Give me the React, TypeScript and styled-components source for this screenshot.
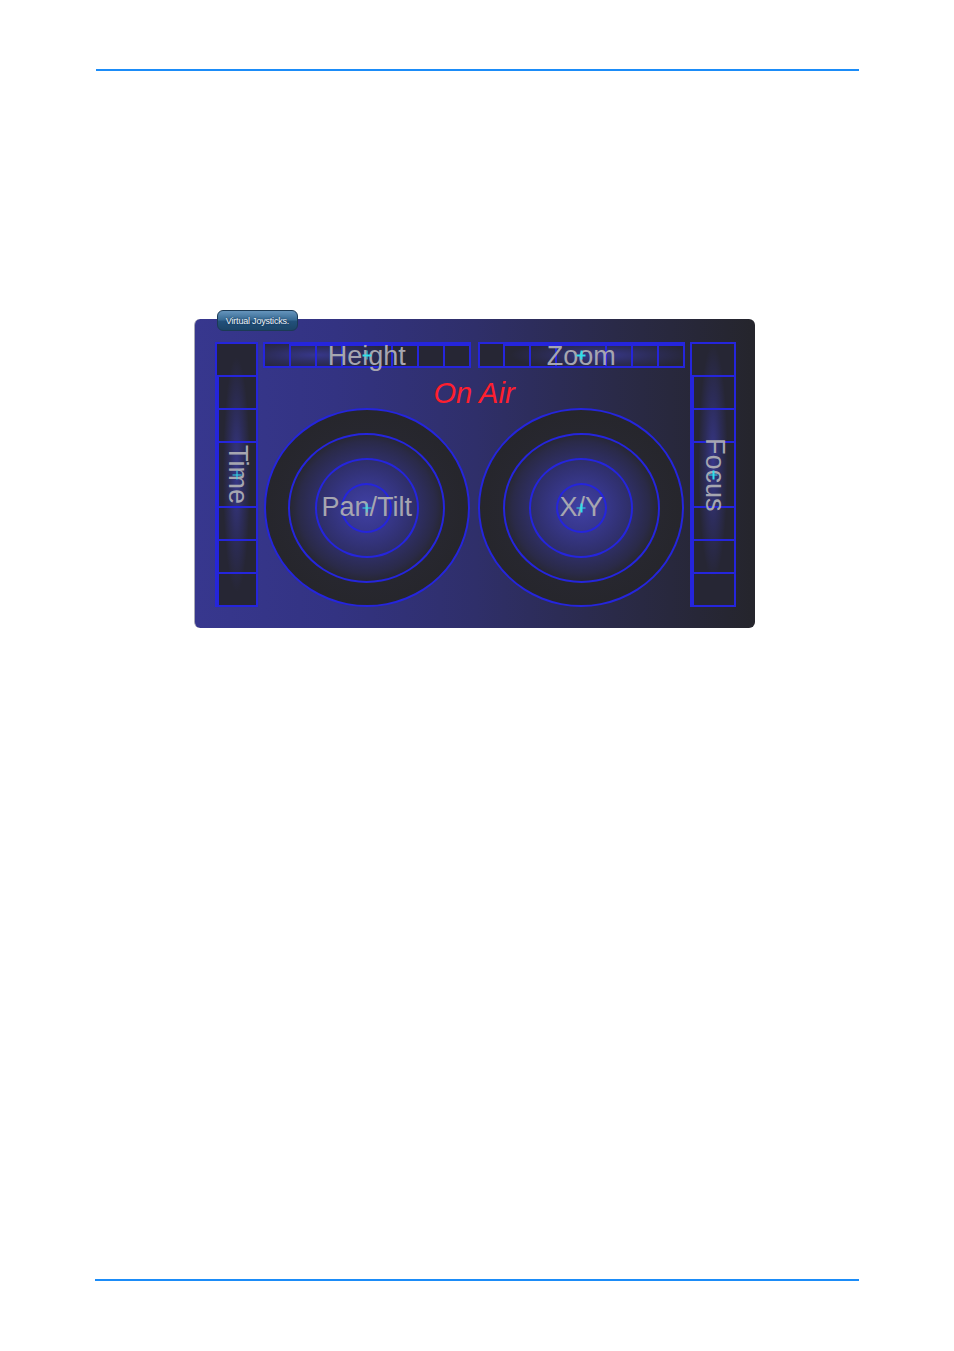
import React from "react";
import styled, { createGlobalStyle } from "styled-components";

const GlobalStyle = createGlobalStyle`
  html, body {
    margin: 0;
    padding: 0;
    background: #ffffff;
    font-family: "Liberation Sans", Arial, sans-serif;
  }
`;

const LINE = "#2525dc";

const Page = styled.div`
  width: 954px;
  height: 1351px;
  display: flex;
  flex-direction: column;
  padding-top: 69px;
  box-sizing: border-box;
  overflow: hidden;
`;

const Rule = styled.div<{ $left: number; $width: number; $top: number; $thick: number }>`
  margin-left: ${({ $left }) => $left}px;
  margin-top: ${({ $top }) => $top}px;
  width: ${({ $width }) => $width}px;
  height: ${({ $thick }) => $thick}px;
  background: #1b8cf8;
  flex-shrink: 0;
`;

const Panel = styled.section`
  position: relative;
  margin: 248px 0 0 194px;
  width: 561px;
  height: 309px;
  box-sizing: border-box;
  padding: 23px 19px 21px 20px;
  border-radius: 6px;
  border-left: 1px solid #a9a9b6;
  background: linear-gradient(
    to right,
    #37378e 0%,
    #333382 25%,
    #2f2f6a 50%,
    #2a2a48 75%,
    #25252c 100%
  );
  display: grid;
  grid-template-columns: 43px 422px 46px;
  grid-template-rows: minmax(0, 1fr);
  column-gap: 5px;
  flex-shrink: 0;
`;

const Tab = styled.div`
  position: absolute;
  top: -9px;
  left: 22px;
  width: 81px;
  height: 21px;
  box-sizing: border-box;
  border-radius: 6px;
  border: 1px solid #1b3a55;
  background: linear-gradient(#6594bc 0%, #3a6d96 45%, #22507a 55%, #1c4567 100%);
  color: #eef4fa;
  font-size: 9px;
  letter-spacing: -0.2px;
  display: flex;
  align-items: center;
  justify-content: center;
  text-shadow: 0 0 2px #0c2a44;
`;

const Strip = styled.div<{ $vertical?: boolean; $glow: string }>`
  position: relative;
  display: flex;
  flex-direction: ${({ $vertical }) => ($vertical ? "column" : "row")};
  border: 2px solid ${LINE};
  box-sizing: border-box;
  min-height: 0;
  background: radial-gradient(
    ${({ $vertical }) => ($vertical ? "35% 45%" : "45% 70%")} at ${({ $glow }) => $glow},
    #37378a 0%,
    #2c2c58 55%,
    #262634 100%
  );
`;

const Cell = styled.div<{ $span: number; $vertical?: boolean }>`
  flex: ${({ $span }) => $span} 1 0;
  display: flex;
  align-items: center;
  justify-content: center;
  min-width: 0;
  min-height: 0;
  box-sizing: border-box;
  & + & {
    ${({ $vertical }) => ($vertical ? "border-top" : "border-left")}: 2px solid ${LINE};
  }
`;

const Label = styled.span<{ $vertical?: boolean }>`
  position: relative;
  z-index: 1;
  font-size: 27px;
  line-height: 1;
  color: #a6a6b0;
  white-space: nowrap;
  writing-mode: ${({ $vertical }) => ($vertical ? "vertical-rl" : "horizontal-tb")};
`;

const Cross = styled.span`
  position: absolute;
  z-index: 2;
  left: 50%;
  top: 50%;
  width: 9px;
  height: 9px;
  transform: translate(-50%, -50%);
  pointer-events: none;
  &::before,
  &::after {
    content: "";
    position: absolute;
    background: #2ee0ea;
  }
  &::before {
    left: 0;
    right: 0;
    top: 4px;
    height: 1.5px;
  }
  &::after {
    top: 0;
    bottom: 0;
    left: 4px;
    width: 1.5px;
  }
`;

const Middle = styled.div`
  display: flex;
  flex-direction: column;
`;

const Pair = styled.div<{ $height: number }>`
  display: grid;
  grid-template-columns: 1fr 1fr;
  grid-template-rows: minmax(0, 1fr);
  column-gap: 7px;
  height: ${({ $height }) => $height}px;
  flex-shrink: 0;
  justify-items: center;
`;

const OnAir = styled.div`
  height: 40px;
  flex-shrink: 0;
  box-sizing: border-box;
  padding-top: 10px;
  line-height: 30px;
  text-align: center;
  font-size: 29px;
  font-style: italic;
  color: #ff1f2e;
`;

const Joystick = styled.div`
  position: relative;
  width: 206px;
  height: 199px;
  box-sizing: border-box;
  border-radius: 50%;
  border: 2px solid ${LINE};
  background: radial-gradient(
    closest-side,
    #4040a4 0%,
    #38388e 22%,
    #30306e 45%,
    #2a2a48 68%,
    #27272f 77%,
    #26262c 100%
  );
  display: flex;
  align-items: center;
  justify-content: center;
`;

const Ring = styled.div<{ $w: number; $h: number }>`
  width: ${({ $w }) => $w}px;
  height: ${({ $h }) => $h}px;
  flex-shrink: 0;
  box-sizing: border-box;
  border-radius: 50%;
  border: 2px solid ${LINE};
  display: flex;
  align-items: center;
  justify-content: center;
`;

const SPANS = [1, 1, 1, 2, 1, 1, 1];

const Slider: React.FC<{ label: string; vertical?: boolean; glow: string; wide?: boolean }> = ({
  label,
  vertical,
  glow,
  wide,
}) => (
  <Strip $vertical={vertical} $glow={glow} style={wide ? { width: "100%" } : undefined}>
    {SPANS.map((span, i) => (
      <Cell key={i} $span={span} $vertical={vertical}>
        {span === 2 && <Label $vertical={vertical}>{label}</Label>}
      </Cell>
    ))}
    <Cross />
  </Strip>
);

const Stick: React.FC<{ label: string }> = ({ label }) => (
  <Joystick>
    <Ring $w={157} $h={150}>
      <Ring $w={104} $h={100}>
        <Ring $w={51} $h={50}>
          <Label>{label}</Label>
        </Ring>
      </Ring>
    </Ring>
    <Cross />
  </Joystick>
);

export default function App() {
  return (
    <>
      <GlobalStyle />
      <Page>
        <Rule $left={96} $width={763} $top={0} $thick={2} />
        <Panel>
          <Tab>Virtual Joysticks.</Tab>
          <Slider label="Time" vertical glow="50% 50%" />
          <Middle>
            <Pair $height={26}>
              <Slider label="Height" glow="25% 50%" wide />
              <Slider label="Zoom" glow="60% 50%" wide />
            </Pair>
            <OnAir>On Air</OnAir>
            <Pair $height={199}>
              <Stick label="Pan/Tilt" />
              <Stick label="X/Y" />
            </Pair>
          </Middle>
          <Slider label="Focus" vertical glow="50% 45%" />
        </Panel>
        <Rule $left={95} $width={764} $top={651} $thick={2} />
      </Page>
    </>
  );
}
